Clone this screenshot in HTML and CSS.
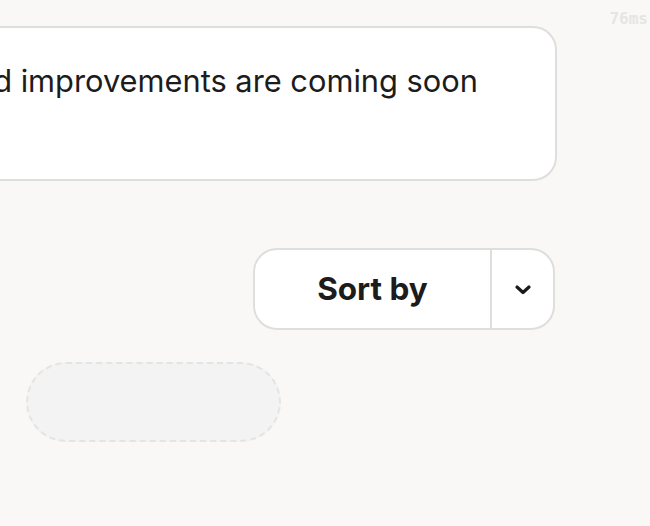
FILE: index.html
```html
<!DOCTYPE html>
<html lang="en">
<head>
<meta charset="utf-8">
<title>Sort</title>
<link rel="stylesheet" href="styles.css">
</head>
<body>
<div class="timing">76ms</div>
<main class="page">
  <section class="notice">
    <p class="notice-text">New features and improvements are coming soon</p>
  </section>
  <div class="toolbar">
    <div class="split-button">
      <button class="split-main" type="button">Sort by</button>
      <button class="split-toggle" type="button" aria-label="More sort options">
        <svg width="18" height="11" viewBox="0 0 18 11" aria-hidden="true"><path d="M3 3l6 5.5 6-5.5" fill="none" stroke="#1a1a1a" stroke-width="3.2" stroke-linecap="round" stroke-linejoin="round"/></svg>
      </button>
    </div>
  </div>
  <div class="placeholder"></div>
</main>
</body>
</html>
```
FILE: styles.css
```css
* { box-sizing: border-box; }
html, body { margin: 0; padding: 0; }
body {
  width: 650px;
  height: 526px;
  overflow: hidden;
  background: #f9f8f6;
  font-family: Inter, "Noto Sans", sans-serif;
  color: #1c1c1c;
  position: relative;
}
.timing {
  position: absolute;
  top: 9px;
  right: 2px;
  font-family: "DejaVu Sans Mono", monospace;
  font-size: 16px;
  font-weight: bold;
  color: #e6e5e3;
}
.page {
  width: 557px;
  padding-top: 26px;
  display: flex;
  flex-direction: column;
}
.notice {
  margin-left: -320px;
  height: 155px;
  background: #fff;
  border: 2px solid #dededc;
  border-radius: 24px;
  padding: 33px 30px 0 30px;
}
.notice-text {
  margin: 0;
  font-size: 30.8px;
  line-height: 40px;
  white-space: nowrap;
  text-align: right;
  padding-right: 47px;
}
.toolbar {
  display: flex;
  justify-content: flex-end;
  margin-top: 67px;
  padding-right: 2px;
}
.split-button {
  display: flex;
  height: 82px;
  background: #fff;
  border: 2px solid #dededc;
  border-radius: 24px;
  overflow: hidden;
}
.split-main {
  width: 237px;
  border: 0;
  border-right: 2px solid #dededc;
  background: transparent;
  font-family: Inter, "Noto Sans", sans-serif;
  font-weight: 700;
  font-size: 31.5px;
  color: #1c1c1c;
  padding: 0 0 2px 0;
}
.split-toggle {
  width: 61px;
  border: 0;
  background: transparent;
  display: flex;
  align-items: center;
  justify-content: center;
  padding: 0;
}
.placeholder {
  margin-top: 32px;
  margin-left: 26px;
  width: 255px;
  height: 80px;
  border: 2px dashed #e4e4e2;
  border-radius: 40px;
  background: #f3f3f3;
}
```
